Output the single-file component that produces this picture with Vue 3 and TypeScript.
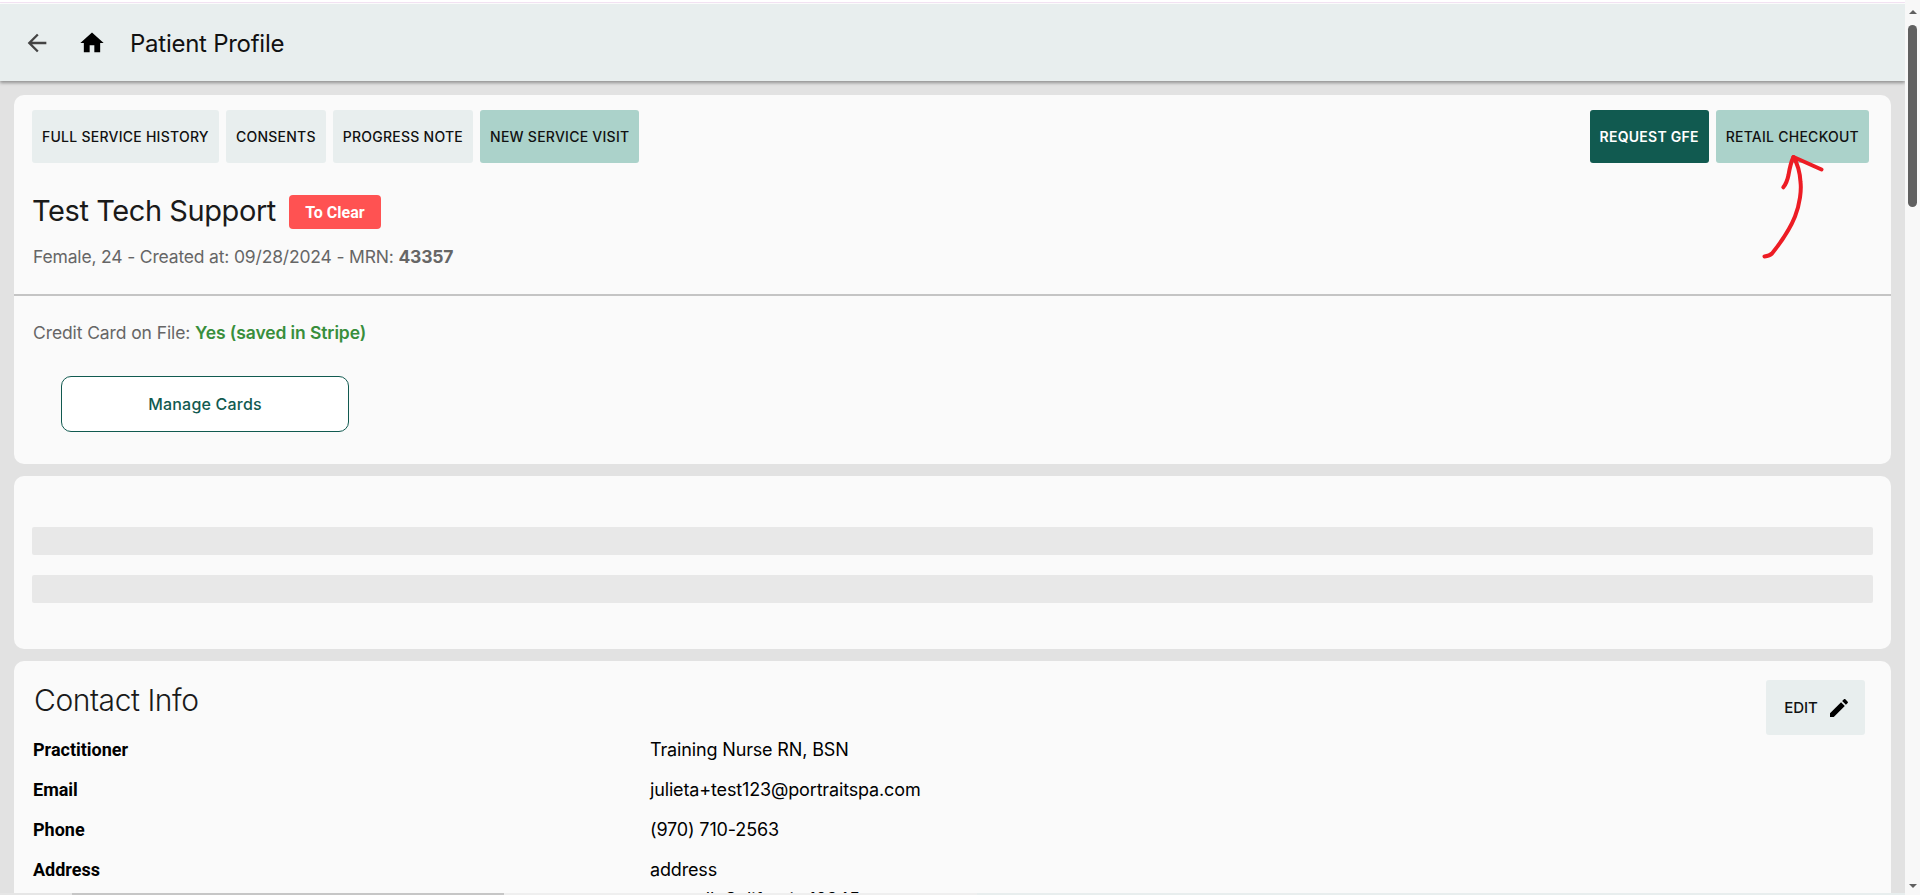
<script setup lang="ts">
interface Row { label: string; value: string[] }
const leftActions = [
  { text: 'FULL SERVICE HISTORY', tone: 'soft' },
  { text: 'CONSENTS', tone: 'soft' },
  { text: 'PROGRESS NOTE', tone: 'soft' },
  { text: 'NEW SERVICE VISIT', tone: 'mint' },
]
const rows: Row[] = [
  { label: 'Practitioner', value: ['Training Nurse RN, BSN'] },
  { label: 'Email', value: ['julieta+test123@portraitspa.com'] },
  { label: 'Phone', value: ['(970) 710-2563'] },
  { label: 'Address', value: ['address', 'onewell, California 12345'] },
]
</script>

<template>
  <div class="page">
    <div class="content">
      <div class="topline"></div>
      <header class="bar">
        <svg class="back" viewBox="0 0 24 24" width="28" height="28"><path d="M20 11H7.83l5.59-5.59L12 4l-8 8 8 8 1.41-1.41L7.83 13H20v-2z" /></svg>
        <svg class="home" viewBox="0 0 24 24" width="28" height="28"><path d="M10 20v-6h4v6h5v-8h3L12 3 2 12h3v8z" /></svg>
        <h1 class="title">Patient Profile</h1>
      </header>
      <main class="cards">
        <section class="card profile">
          <div class="actions">
            <div class="group">
              <button v-for="a in leftActions" :key="a.text" class="act" :class="a.tone">{{ a.text }}</button>
            </div>
            <div class="group">
              <button class="act dark">REQUEST GFE</button>
              <button class="act mint wide">RETAIL CHECKOUT</button>
            </div>
          </div>
          <div class="identity">
            <h2 class="name">Test Tech Support</h2>
            <span class="badge">To Clear</span>
          </div>
          <p class="meta">Female, 24 - Created at: 09/28/2024 - MRN: <b>43357</b></p>
          <hr class="rule" />
          <p class="cc">Credit Card on File: <span class="yes">Yes (saved in Stripe)</span></p>
          <button class="manage">Manage Cards</button>
        </section>

        <section class="card loading">
          <div class="skeleton"></div>
          <div class="skeleton"></div>
        </section>

        <section class="card contact">
          <div class="contact-head">
            <h2 class="section-title">Contact Info</h2>
            <button class="edit">
              EDIT
              <svg viewBox="0 0 24 24" width="24" height="24"><path d="M3 17.25V21h3.75L17.81 9.94l-3.75-3.75L3 17.25zM20.71 7.04c.39-.39.39-1.02 0-1.41l-2.34-2.34c-.39-.39-1.02-.39-1.41 0l-1.83 1.83 3.75 3.75 1.83-1.83z" /></svg>
            </button>
          </div>
          <dl class="rows">
            <div v-for="r in rows" :key="r.label" class="row">
              <dt>{{ r.label }}</dt>
              <dd><span v-for="line in r.value" :key="line" class="line">{{ line }}</span></dd>
            </div>
          </dl>
        </section>
      </main>
    </div>

    <aside class="scrollbar">
      <div class="topline"></div>
      <span class="tri up"></span>
      <span class="thumb"></span>
      <span class="spring"></span>
      <span class="tri down"></span>
    </aside>

    <div class="hscroll">
      <span class="h-a"></span><span class="h-b"></span><span class="h-c"></span><span class="h-d"></span>
    </div>

    <svg class="scribble" viewBox="0 0 1920 895" width="1920" height="895">
      <path d="M1764.500 256.500C1768 256 1770 255.500 1772 253.500C1778 246 1790 229 1795 216.500C1800 204 1801.500 190 1800.500 182C1800 172 1797 163 1793.500 157L1821.500 169.500" />
      <path d="M1783.300 187.300C1786 184 1787.500 180 1788.500 175C1789.500 169 1791 162 1793.500 157" />
    </svg>
  </div>
</template>

<style>
html, body { margin: 0; background: #e2e2e2; }
</style>

<style scoped>
.page {
  position: relative;
  display: flex;
  width: 1920px;
  height: 895px;
  overflow: hidden;
  background: #e2e2e2;
  font-family: Inter, "Liberation Sans", sans-serif;
  color: #111;
}
.content { flex: 1; min-width: 0; display: flex; flex-direction: column; }
.topline { height: 4px; flex: none; background: linear-gradient(#fff 0 2px, #f3e3f3 2px 3px, #fff 3px); }
.bar {
  flex: none;
  height: 77px;
  display: flex;
  align-items: center;
  padding-left: 23px;
  background: #e8eeee;
  box-shadow: 0 2px 3px rgba(0, 0, 0, .35);
  position: relative;
  z-index: 1;
}
.bar svg { flex: none; margin-top: 1px; }
.back { fill: #444; }
.home { fill: #000; margin-left: 27px; }
.title {
  margin: 2px 0 0 24px;
  font-size: 24px;
  font-weight: 400;
  letter-spacing: -.26px;
  color: #111;
}
.cards { padding: 14px 14px 0; display: flex; flex-direction: column; gap: 12px; }
.card { background: #fafafa; border-radius: 10px; }
.profile { height: 369px; }
.actions { display: flex; justify-content: space-between; padding: 15px 22px 0 18px; }
.group { display: flex; gap: 7px; }
.act {
  height: 53px;
  padding: 0 10px;
  border: 0;
  border-radius: 3px;
  font: 500 14px Inter, sans-serif;
  letter-spacing: .25px;
  color: #111;
}
.soft { background: #e8eeee; }
.mint { background: #abd2ca; }
.dark { background: #115a50; color: #fff; font-weight: 600; }
.identity { display: flex; align-items: center; gap: 13px; margin: 30px 0 0 18px; height: 34px; }
.name { margin: 0; font-size: 29px; font-weight: 400; letter-spacing: -.42px; color: #1a1a1a; }
.badge {
  width: 92px;
  height: 34px;
  margin-top: 4px;
  display: flex;
  align-items: center;
  justify-content: center;
  border-radius: 4px;
  background: #ff5252;
  color: #fff;
  font: 700 16px Roboto, sans-serif;
}
.meta { margin: 19px 0 0 19px; font-size: 17.500px; line-height: 22px; letter-spacing: -.17px; color: #666; }
.meta b { font-weight: 700; }
.rule { margin: 26px 0 0; border: 0; height: 2px; background: #c4c4c4; }
.cc { margin: 26px 0 0 19px; font-size: 17.500px; line-height: 22px; letter-spacing: -.1px; color: #666; }
.yes { color: #388e3c; font-weight: 600; }
.manage {
  display: block;
  width: 288px;
  height: 56px;
  margin: 32px 0 0 47px;
  background: #fff;
  border: 1px solid #115a50;
  border-radius: 10px;
  color: #115a50;
  font: 500 16px Inter, sans-serif;
  letter-spacing: .2px;
}
.loading { height: 173px; padding: 51px 18px 0; display: flex; flex-direction: column; gap: 20px; box-sizing: border-box; }
.skeleton { height: 28px; border-radius: 2px; background: #e8e8e8; }
.contact { height: 400px; padding: 0 26px 0 19px; }
.contact-head { display: flex; justify-content: space-between; align-items: flex-start; height: 69px; }
.section-title { margin: 19px 0 0 1px; font-size: 30px; line-height: 40px; font-weight: 300; letter-spacing: -.45px; color: #1a1a1a; }
.edit {
  margin-top: 19px;
  width: 99px;
  height: 55px;
  display: flex;
  align-items: center;
  justify-content: center;
  gap: 9px;
  padding: 0 0 0 4px;
  border: 0;
  border-radius: 3px;
  background: #e8eeee;
  color: #111;
  font: 500 15px Inter, sans-serif;
}
.edit svg { fill: #000; }
.rows { margin: 0; }
.row { display: grid; grid-template-columns: 617px 1fr; min-height: 39.300px; align-items: start; }
.row dt { font: 700 18px/40px Roboto, sans-serif; color: #000; }
.row dd { margin: 0; font: 400 18px/40px Inter, sans-serif; letter-spacing: -.15px; color: #000; }
.line { display: block; }
.line + .line { margin-top: -10px; }
.scrollbar { flex: none; width: 15px; background: #f8f8f8; display: flex; flex-direction: column; align-items: center; position: relative; z-index: 2; }
.thumb { width: 9px; height: 182px; margin-top: 11px; border-radius: 5px; background: #606060; flex: none; }
.tri { width: 0; height: 0; border-left: 4.500px solid transparent; border-right: 4.500px solid transparent; flex: none; }
.up { margin-top: 6px; border-bottom: 4.500px solid #606060; }
.down { margin-bottom: 7px; border-top: 4.500px solid #606060; }
.spring { flex: 1; }
.hscroll { position: absolute; left: 0; right: 15px; bottom: 0; height: 2px; display: flex; z-index: 3; }
.h-a { width: 72px; background: #e6e6e6; }
.h-b { width: 432px; background: #c6c6c6; }
.h-c { width: 473px; background: #efefef; }
.h-d { flex: 1; background: #e8eeee; }
.scribble { position: absolute; left: 0; top: 0; z-index: 4; pointer-events: none; }
.scribble path { fill: none; stroke: #ed1c24; stroke-width: 4; stroke-linecap: round; stroke-linejoin: round; }
</style>
